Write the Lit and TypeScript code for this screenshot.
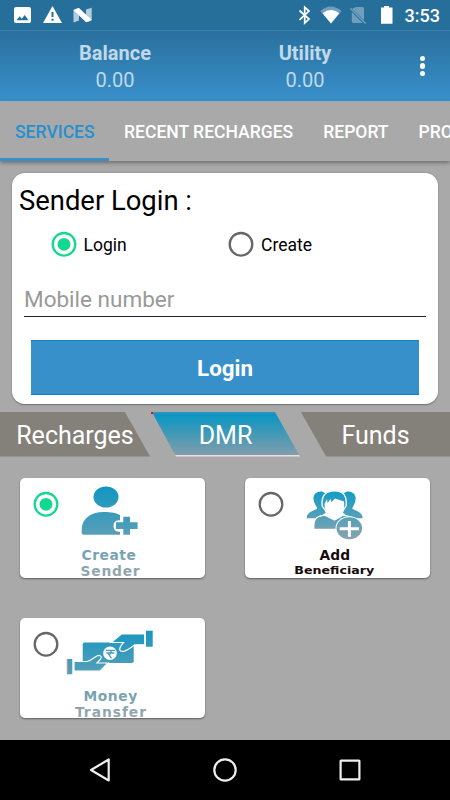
import { LitElement, html, css, svg } from "lit";
import { customElement, property, state } from "lit/decorators.js";
import { classMap } from "lit/directives/class-map.js";

@customElement("radio-dot")
class RadioDot extends LitElement {
  @property({ type: Boolean }) checked = false;
  static styles = css`
    :host { display: block; width: 26px; height: 26px; }
    svg { display: block; }
    .ring { fill: none; stroke: #666; stroke-width: 2.3; }
    .on { stroke: #12d890; }
    .dot { fill: #12d890; }
  `;
  render() {
    return html`<svg width="26" height="26" viewBox="0 0 26 26">
      <circle class=${classMap({ ring: true, on: this.checked })} cx="13" cy="13.3" r="11.3" />
      ${this.checked ? svg`<circle class="dot" cx="13" cy="13.3" r="6.4" />` : ""}
    </svg>`;
  }
}

@customElement("status-bar")
class StatusBar extends LitElement {
  static styles = css`
    :host { display: block; height: 31px; flex: none; background: #276f9b; border-bottom: 1px solid #3583b2; }
    .row { display: flex; align-items: center; height: 30px; padding: 0 10px 0 14px; justify-content: space-between; }
    .group { display: flex; align-items: center; }
    svg { display: block; }
    .time { font-size: 18px; font-weight: 500; color: #fff; line-height: 20px; margin-left: 12px; padding-top: 1px; }
  `;
  render() {
    return html`<div class="row">
      <div class="group">
        <svg width="80" height="30" viewBox="14 0 80 30">
          <path fill="#fff" fill-rule="evenodd" d="M16 7H29Q31 7 31 9V21Q31 23 29 23H16Q14 23 14 21V9Q14 7 16 7ZM16.5 20.3H28.5L24.7 15L21.8 18.8L19.7 16.3Z" />
          <path fill="#fff" fill-rule="evenodd" d="M52.5 6L62 23H43ZM51.5 12V17H53.5V12ZM51.5 18.7V20.7H53.5V18.7Z" />
          <path fill="#b4cddd" d="M73.5 10L79 8V20.5L73.5 22.5ZM86 9.5L91.7 7.8V20L86 22Z" />
          <path fill="#fff" d="M73.5 10Q76 8.6 79 8L91.7 20Q89 21.8 86 22.3Z" />
        </svg>
      </div>
      <div class="group">
        <svg width="96" height="30" viewBox="297 0 96 30">
          <path fill="none" stroke="#fff" stroke-width="1.7" d="M299.5 10.5L309 19L304.7 23V7.2L309 11L299.5 19.8" />
          <path fill="#709fbc" d="M320.3 11Q331 1.8 341.5 11L331 23.6Z" />
          <path fill="#fff" d="M322.5 13.3Q331 6.5 339.3 13.3L331 23.6Z" />
          <path fill="#709fbc" d="M356 7H362.5Q364 7 364 8.5V20L352.2 8.8ZM351.8 12L362.6 22.9H353.3Q351.8 22.9 351.8 21.5Z" />
          <path stroke="#709fbc" stroke-width="1.5" d="M350.3 8.2L365.6 23.5" />
          <path fill="#fff" d="M384 6H389V7.5H392.5V23.8H381V7.5H384Z" />
        </svg>
        <span class="time">3:53</span>
      </div>
    </div>`;
  }
}

@customElement("balance-header")
class BalanceHeader extends LitElement {
  static styles = css`
    :host { display: flex; height: 70px; flex: none; align-items: center; background: linear-gradient(#2a709d, #3890cb); color: #c0d9e9; }
    .col { width: 150px; text-align: center; font-size: 20px; line-height: 27px; padding-top: 2px; }
    .first { margin-left: 40px; margin-right: 40px; }
    .col b { display: block; font-weight: 700; }
    .menu { display: flex; flex-direction: column; gap: 2px; margin-left: 39.5px; }
    .menu i { width: 5.6px; height: 5.6px; border-radius: 50%; background: #fff; }
  `;
  render() {
    return html`
      <div class="col first"><b>Balance</b>0.00</div>
      <div class="col"><b>Utility</b>0.00</div>
      <div class="menu"><i></i><i></i><i></i></div>`;
  }
}

@customElement("service-card")
class ServiceCard extends LitElement {
  @property() kind = "";
  @property({ type: Boolean }) checked = false;
  static styles = css`
    :host { display: block; position: relative; width: 185px; height: 100px; border-radius: 5px; background: #fff; box-shadow: 0 1px 2px rgba(0, 0, 0, 0.45); }
    radio-dot { position: absolute; left: 13px; top: 13px; }
    svg { display: block; }
    text { font-family: "DejaVu Sans", sans-serif; font-weight: 700; font-size: 13.8px; }
    .small { font-size: 10.3px; }
    .ink { fill: #160b0b; }
  `;
  art() {
    if (this.kind === "create") {
      return svg`
        <ellipse cx="86" cy="19" rx="12.5" ry="10.5" fill="url(#g)" />
        <path fill="url(#g)" d="M61.7 55V52C61.7 41 70 34 84 34C91 34 97 35.3 100 37V42.3H98.5Q93.5 42.7 93.5 48Q93.5 53.5 98.5 53.8H100V56.7H63.5Q61.7 56.7 61.7 55Z" />
        <path fill="url(#g)" d="M103.3 38.7H110V44.2H117.6V51H110V56.7H103.3V51H96V44.2H103.3Z" />
        <text fill="url(#g)" x="61.6" y="82" textLength="54.2" lengthAdjust="spacing">Create</text>
        <text fill="url(#g)" x="60.6" y="98" textLength="59" lengthAdjust="spacing">Sender</text>`;
    }
    if (this.kind === "add") {
      return svg`
        <path fill="url(#h)" d="M61.7 40.3C61.8 35 65.5 33.6 71.5 31.3Q73 30.5 71 28Q67.5 23 68.8 18Q70.5 13.2 77 13.5L81 15.5L82 34L72 40.3ZM117.7 40.3C117.5 35 113.5 33.6 108 31.3Q106.5 30.5 108.5 28Q111.5 23 110.3 18Q108.5 13.2 102 13.5L98 15.5L97 34L105 40.3Z" />
        <path fill="url(#h)" stroke="#fff" stroke-width="1.3" d="M68.8 51.5V47C69 40 73 38 80 37.2L89.5 42L98 37.2Q108 38.5 110 43V51.5Z" />
        <path fill="url(#h)" stroke="#fff" stroke-width="1.3" d="M77.2 28Q75.5 12.8 89.5 12.8Q103 12.8 101 28L98.5 32Q96 39 89.5 40Q83 39 80 32Z" />
        <path fill="#fff" d="M79.5 26L82 21L82.5 25L85.5 21L86.5 24L90 20.5L99 23.5Q100 34 95 37.3L89.5 40.5L84 37.3Q79.5 33.5 79.5 26Z" />
        <ellipse cx="104.3" cy="50.3" rx="13.8" ry="12" fill="#fff" />
        <ellipse cx="104.3" cy="50.3" rx="12.8" ry="11" fill="url(#h)" />
        <path stroke="#fff" stroke-width="3" d="M94.7 50.8H114M104.4 43V58.7" />
        <text class="ink" x="74.4" y="82" textLength="30.7" lengthAdjust="spacing">Add</text>
        <text class="ink small" x="49.3" y="95.8" textLength="80" lengthAdjust="spacingAndGlyphs">Beneficiary</text>`;
    }
    return svg`
      <rect x="62.7" y="24.5" width="51" height="20.5" rx="1.8" fill="url(#g)" />
      <path fill="url(#g)" stroke="#fff" stroke-width="1.2" d="M54 43.5H67C71 43 73 40 77 38Q80.5 36.5 81.2 39Q81.5 40.5 77 45H88L80 53.2H54Z" />
      <path fill="url(#g)" stroke="#fff" stroke-width="1.2" d="M124.7 26.8H115Q108 32 104 33.3Q99.5 34 99.7 31Q100 28.5 103.5 24.5H91L101.5 16H124.7Z" />
      <path fill="url(#g)" d="M47 41H52.3V56.3H47ZM126 12.7H132.7V28.7H126Z" />
      <path fill="#e39aa0" d="M46.7 41H47.6V55H46.7Z" />
      <circle cx="90" cy="35.3" r="6.8" fill="#fff" />
      <path fill="none" stroke="#4c9cb6" stroke-width="1.3" d="M86 32.3H95M86.3 35H94.3M90 32.3Q92.5 33.5 90 36L88.8 36.6L91.5 40.3" />
      <text fill="url(#g)" x="63.4" y="82.6" textLength="53.8" lengthAdjust="spacing">Money</text>
      <text fill="url(#g)" x="55" y="98.6" textLength="71" lengthAdjust="spacing">Transfer</text>`;
  }
  render() {
    return html`
      <svg width="185" height="100" viewBox="0 0 185 100">
        <defs>
          <linearGradient id="g" gradientUnits="userSpaceOnUse" x1="0" y1="8" x2="0" y2="100">
            <stop offset="0" stop-color="#0f96c2" /><stop offset="1" stop-color="#9aa6ad" />
          </linearGradient>
          <linearGradient id="h" gradientUnits="userSpaceOnUse" x1="0" y1="12" x2="0" y2="62">
            <stop offset="0" stop-color="#0f9cc7" /><stop offset="1" stop-color="#8ca3ad" />
          </linearGradient>
        </defs>
        ${this.art()}
      </svg>
      <radio-dot ?checked=${this.checked}></radio-dot>`;
  }
}

@customElement("app-root")
class AppRoot extends LitElement {
  @state() mode = "Login";
  @state() service = "create";
  static styles = css`
    :host { display: flex; flex-direction: column; width: 450px; height: 800px; overflow: hidden; background: #a9a9a9; font-family: Roboto, sans-serif; color: #000; }
    * { box-sizing: border-box; }
    .tabs { display: flex; height: 60px; flex: none; overflow: hidden; border-top: 1px solid #9aa9b3; white-space: nowrap; color: #fff; font-size: 17.55px; font-weight: 500; line-height: 60px; }
    .tabwrap { box-shadow: 0 2px 4px rgba(0, 0, 0, 0.35); flex: none; }
    .tab { padding: 0 15px; flex: none; }
    .tab.active { color: #2590cf; border-bottom: 3px solid #3890cb; width: 109px; }
    .panel { margin: 12px 12.5px 0 12px; height: 230.5px; flex: none; border-radius: 12.5px; background: #fff; box-shadow: 0 0.5px 1.5px rgba(0, 0, 0, 0.35); padding: 10px 11.5px 0 12px; }
    h1 { margin: 0 0 0 -5px; font-weight: 400; font-size: 27.4px; line-height: 36px; }
    .modes { display: flex; height: 50px; align-items: center; padding-left: 26.5px; }
    .mode { display: flex; align-items: center; gap: 7px; width: 177.5px; font-size: 17.5px; }
    .mode span { padding-top: 1px; }
    .field { height: 48px; border-bottom: 1px solid #222; color: #999; font-size: 22.5px; line-height: 61px; }
    .button { margin: 23px 7px 0; height: 55px; background: #3890cb; color: #fff; border-top: 1px solid #0c80c4; border-bottom: 1px solid #0c80c4; font-weight: 700; font-size: 22.3px; line-height: 55px; text-align: center; }
    .sections { display: flex; margin-top: 8.5px; height: 44.5px; flex: none; gap: 1px; color: #fff; font-size: 25px; line-height: 48px; text-align: center; }
    .sections div { width: 149px; background: #84817a; }
    .sections .left { width: 150px; clip-path: polygon(0 0, 125px 0, 100% 100%, 0 100%); }
    .sections .mid { clip-path: polygon(0 0, 124px 0, 100% 100%, 25px 100%, 2px 2px, 0 2px); background: linear-gradient(#e01020, #e01020) 0 0 / 2px 2px no-repeat, linear-gradient(#3890c4 0, #0a96c1 3px, #819dac 43px, #eadfe2 43px); }
    .sections .right { clip-path: polygon(0 0, 100% 0, 100% 100%, 25px 100%); }
    .grid { display: grid; grid-template-columns: 185px 185px; gap: 40px; padding: 21px 20px 0; flex: 1; align-content: start; }
    .nav { height: 60px; flex: none; background: #000; }
    .nav svg { display: block; }
  `;
  render() {
    return html`
      <status-bar></status-bar>
      <balance-header></balance-header>
      <div class="tabwrap"><div class="tabs">
        <div class="tab active">SERVICES</div>
        <div class="tab">RECENT RECHARGES</div>
        <div class="tab">REPORT</div>
        <div class="tab">PROFILE</div>
      </div></div>
      <div class="panel">
        <h1>Sender Login :</h1>
        <div class="modes">
          ${["Login", "Create"].map((m) => html`<div class="mode" @click=${() => (this.mode = m)}>
            <radio-dot ?checked=${this.mode === m}></radio-dot><span>${m}</span></div>`)}
        </div>
        <div class="field">Mobile number</div>
        <div class="button">Login</div>
      </div>
      <div class="sections">
        <div class="left">Recharges</div><div class="mid">DMR</div><div class="right">Funds</div>
      </div>
      <div class="grid">
        ${["create", "add", "money"].map((k) => html`<service-card kind=${k}
          ?checked=${this.service === k} @click=${() => (this.service = k)}></service-card>`)}
      </div>
      <div class="nav">
        <svg width="450" height="60" viewBox="0 0 450 60" fill="none" stroke="#eee" stroke-width="2.2" stroke-linejoin="round">
          <path d="M91 30L108.7 19.5V40.5Z" />
          <circle cx="225" cy="30" r="10.7" />
          <rect x="340.6" y="20.6" width="18.8" height="18.8" rx="0.5" />
        </svg>
      </div>`;
  }
}
